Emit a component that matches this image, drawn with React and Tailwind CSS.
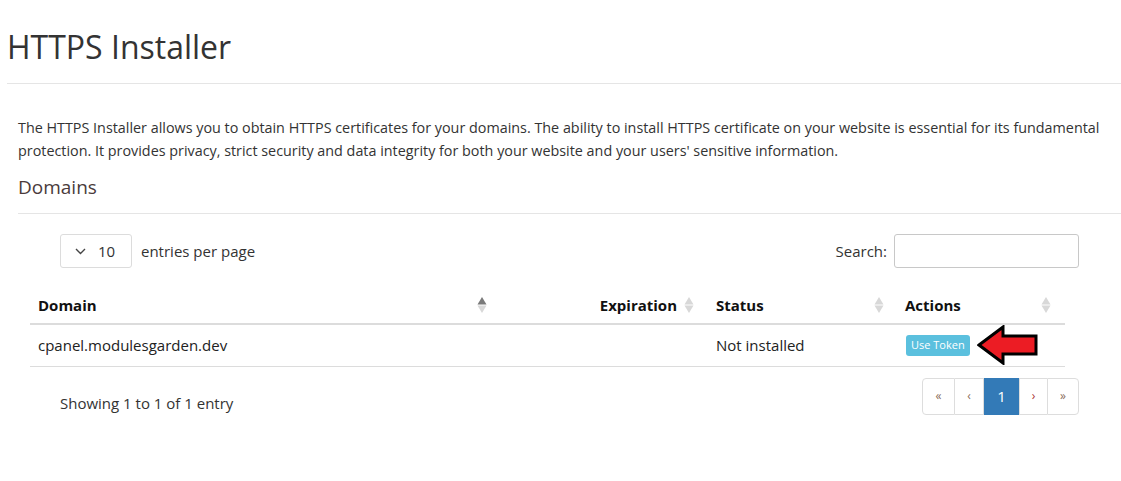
import React from "react";

function SortIcon({ active }) {
  return (
    <svg width="10" height="18" viewBox="0 0 10 18" className="shrink-0">
      <path d="M5 1 L9.5 8.5 L0.5 8.5 Z" fill={active ? "#7a7a7a" : "#d8d8d8"} />
      <path d="M5 17 L9.5 9.5 L0.5 9.5 Z" fill="#d8d8d8" />
    </svg>
  );
}

function RedArrow() {
  return (
    <svg width="62" height="40" viewBox="0 0 62 40" className="shrink-0">
      <path
        d="M2 20 L26 2 L26 11 L59 11 L59 29 L26 29 L26 38 Z"
        fill="#ec1c24"
        stroke="#000"
        strokeWidth="3"
        strokeLinejoin="miter"
      />
    </svg>
  );
}

export default function App() {
  return (
    <div className="min-h-screen bg-white text-[#333] font-['Open_Sans',sans-serif]">
      <div className="pl-[7px]">
        <h1 className="pt-[27px] pb-[16px] text-[32px] leading-[40px] text-[#333] border-b border-[#e5e5e5]">
          HTTPS Installer
        </h1>
      </div>

      <div className="pl-[18px]">
        <p className="mt-[32px] text-[14.35px] leading-[23px] text-[#333]">
          The HTTPS Installer allows you to obtain HTTPS certificates for your domains. The ability to install HTTPS certificate on your website is essential for its fundamental protection. It provides privacy, strict security and data integrity for both your website and your users' sensitive information.
        </p>
        <h2 className="mt-[12px] pb-[13px] text-[19px] leading-[26px] text-[#4a3b3b] border-b border-[#e5e5e5]">
          Domains
        </h2>

        <div className="mr-[56px] ml-[12px] mt-[20px]">
          <div className="flex items-center justify-between pl-[30px]">
            <div className="flex items-center gap-[9px]">
              <div className="flex items-center gap-[12px] h-[34px] w-[72px] border border-[#dcdcdc] rounded-[3px] pl-[14px]">
                <svg width="11" height="7" viewBox="0 0 11 7">
                  <path d="M1 1 L5.5 5.5 L10 1" fill="none" stroke="#444" strokeWidth="1.4" />
                </svg>
                <span className="text-[15px] text-[#333]">10</span>
              </div>
              <span className="text-[15px] text-[#333]">entries per page</span>
            </div>
            <div className="flex items-center gap-[7px] -mr-[14px]">
              <span className="text-[15px] text-[#333]">Search:</span>
              <input className="h-[34px] w-[185px] border border-[#c8c8c8] rounded-[3px] outline-none" />
            </div>
          </div>

          <table className="mt-[19px] w-[1035px] border-collapse text-[15px]">
            <thead>
              <tr className="border-b-2 border-[#dcdcdc]">
                <th className="w-[463px] h-[37px] pl-[8px] pr-[6px] text-left font-bold text-[#111]">
                  <div className="flex items-center justify-between">
                    <span>Domain</span>
                    <SortIcon active />
                  </div>
                </th>
                <th className="w-[214px] pr-[13px] text-right font-bold text-[#111]">
                  <div className="flex items-center justify-end gap-[7px]">
                    <span>Expiration</span>
                    <SortIcon />
                  </div>
                </th>
                <th className="w-[189px] pl-[9px] pr-[12px] text-left font-bold text-[#111]">
                  <div className="flex items-center justify-between">
                    <span>Status</span>
                    <SortIcon />
                  </div>
                </th>
                <th className="pl-[9px] pr-[14px] text-left font-bold text-[#111]">
                  <div className="flex items-center justify-between">
                    <span>Actions</span>
                    <SortIcon />
                  </div>
                </th>
              </tr>
            </thead>
            <tbody>
              <tr className="border-b border-[#dcdcdc]">
                <td className="h-[42px] pl-[8px] text-[#222]">cpanel.modulesgarden.dev</td>
                <td></td>
                <td className="pl-[9px] text-[#222]">Not installed</td>
                <td className="pl-[10px]">
                  <div className="flex items-center gap-[7px]">
                    <span className="inline-flex items-center h-[21px] px-[5px] rounded-[3px] bg-[#5bc0de] text-white text-[11px]">
                      Use Token
                    </span>
                    <RedArrow />
                  </div>
                </td>
              </tr>
            </tbody>
          </table>

          <div className="mt-[11px] flex items-start justify-between pl-[30px] -mr-[14px]">
            <span className="pt-[14px] text-[15px] text-[#333]">Showing 1 to 1 of 1 entry</span>
            <div className="flex h-[37px] text-[12px]">
              <span className="flex items-center justify-center w-[33px] border border-[#ddd] rounded-l-[4px] text-[#8a6d5a]">«</span>
              <span className="flex items-center justify-center w-[29px] border border-l-0 border-[#ddd] text-[#8a6d5a]">‹</span>
              <span className="flex items-center justify-center w-[35px] bg-[#337ab7] text-white text-[15px]">1</span>
              <span className="flex items-center justify-center w-[28px] border border-r-0 border-[#ddd] text-[#a33]">›</span>
              <span className="flex items-center justify-center w-[32px] border border-[#ddd] rounded-r-[4px] text-[#8a6d5a]">»</span>
            </div>
          </div>
        </div>
      </div>
    </div>
  );
}
